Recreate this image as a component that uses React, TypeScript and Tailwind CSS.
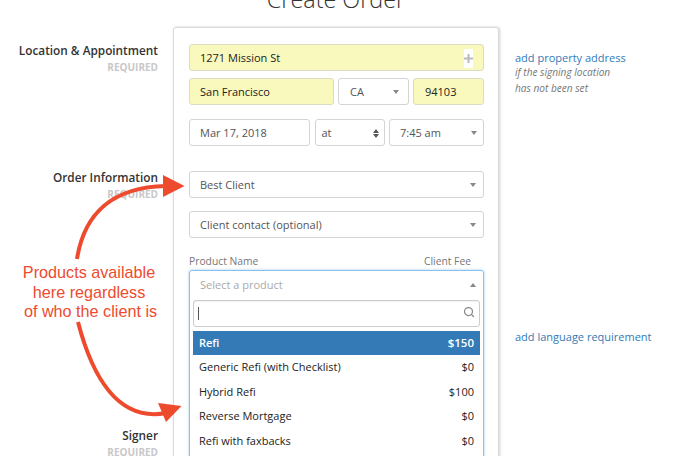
import React from 'react';
import { Search } from 'lucide-react';

const Caret = ({ up = false }: { up?: boolean }) => (
  <svg width="6" height="4" viewBox="0 0 6 4" className="shrink-0">
    <path d={up ? 'M3 0 L6 4 L0 4 Z' : 'M0 0 L6 0 L3 4 Z'} fill="#888" />
  </svg>
);

const boxBase =
  'h-[27px] pt-[1px] rounded-[3px] border flex items-center justify-between text-[11px] shrink-0';
const yellow = `${boxBase} bg-[#f9f9bd] border-[#dcdcc4] text-[#222]`;
const plain = `${boxBase} bg-white border-[#d4d4d4] text-[#555]`;

const SectionLabel = ({ title, className }: { title: string; className: string }) => (
  <div className={`flex flex-col items-end ${className}`}>
    <div className="text-[11.8px] leading-[16px] font-semibold text-[#333]">{title}</div>
    <div className="text-[10px] leading-[14px] mt-[2px] font-bold text-[#c8c8c8]">REQUIRED</div>
  </div>
);

const products = [
  { name: 'Generic Refi (with Checklist)', fee: '$0' },
  { name: 'Hybrid Refi', fee: '$100' },
  { name: 'Reverse Mortgage', fee: '$0' },
  { name: 'Refi with faxbacks', fee: '$0' },
];

const Annotation = () => (
  <>
    <svg width="200" height="456" viewBox="0 0 200 456" className="absolute left-0 top-0">
      <path d="M77 259 C84 214 112 187 166 186" fill="none" stroke="#ee4b2e" strokeWidth="4" />
      <path d="M184.5 186 L163 175 L163 197 Z" fill="#ee4b2e" />
      <path d="M78 322 C92 376 118 422 166 413" fill="none" stroke="#ee4b2e" strokeWidth="4" />
      <path d="M181.5 406 L158 403 L166 422 Z" fill="#ee4b2e" />
    </svg>
    <div className="absolute left-[4px] top-[263px] w-[170px] text-center text-[16.2px] leading-[19.5px] text-[#ee4b2e] font-['Liberation_Sans',sans-serif]">
      <div>Products available</div>
      <div>here regardless</div>
      <div className="pl-[3px]">of who the client is</div>
    </div>
  </>
);

export default function App() {
  return (
    <div className="relative w-[688px] h-[456px] overflow-hidden bg-white font-['Open_Sans',sans-serif]">
      <div className="h-[27px] flex justify-center items-end pr-[16px]">
        <h1 className="text-[23.4px] leading-[32px] mb-[12px] font-light text-[#333] whitespace-nowrap">Create Order</h1>
      </div>
      <div className="flex items-start">
        <div className="w-[173px] shrink-0 pr-[15px]">
          <SectionLabel title="Location & Appointment" className="mt-[15px]" />
          <SectionLabel title="Order Information" className="mt-[95px]" />
          <SectionLabel title="Signer" className="mt-[226px]" />
        </div>

        <div className="w-[326px] h-[460px] shrink-0 bg-white border border-[#dadada] rounded-[3px] shadow-[1px_0_3px_rgba(0,0,0,0.18)] pl-[15px] pr-[14px] pt-[16px] flex flex-col">
          <div className={`${yellow} pl-[10px] pr-[10px]`}>
            <span>1271 Mission St</span>
            <span className="w-[9px] h-[19px] bg-white flex items-center justify-center">
              <svg width="9" height="9" viewBox="0 0 9 9"><path d="M3.5 0 H5.5 V3.5 H9 V5.5 H5.5 V9 H3.5 V5.5 H0 V3.5 H3.5 Z" fill="#bbb" /></svg>
            </span>
          </div>
          <div className="flex justify-between mt-[7px]">
            <div className={`${yellow} w-[145px] pl-[10px]`}>San Francisco</div>
            <div className={`${plain} w-[71px] pl-[11px] pr-[9px]`}>
              <span>CA</span>
              <Caret />
            </div>
            <div className={`${yellow} w-[71px] pl-[11px]`}>94103</div>
          </div>
          <div className="flex justify-between mt-[14px]">
            <div className={`${plain} w-[121px] pl-[10px]`}>Mar 17, 2018</div>
            <div className={`${plain} w-[70px] pl-[6px] pr-[5px]`}>
              <span>at</span>
              <span className="flex flex-col gap-[1px]">
                <svg width="6" height="4" viewBox="0 0 6 4"><path d="M3 0 L6 4 L0 4 Z" fill="#555" /></svg>
                <svg width="6" height="4" viewBox="0 0 6 4"><path d="M0 0 L6 0 L3 4 Z" fill="#555" /></svg>
              </span>
            </div>
            <div className={`${plain} w-[95px] pl-[10px] pr-[6px]`}>
              <span>7:45 am</span>
              <Caret />
            </div>
          </div>
          <div className={`${plain} mt-[25px] pl-[10px] pr-[7px]`}>
            <span>Best Client</span>
            <Caret />
          </div>
          <div className={`${plain} mt-[13px] pl-[10px] pr-[7px]`}>
            <span>Client contact (optional)</span>
            <Caret />
          </div>
          <div className="flex justify-between mt-[14px] pr-[13px] text-[10.3px] leading-[18px] text-[#777]">
            <span>Product Name</span>
            <span>Client Fee</span>
          </div>
          <div className="rounded-t-[3px] border border-[#8cc0ea] shadow-[0_0_3px_rgba(102,175,233,0.6)] h-[200px] flex flex-col px-[3px]">
            <div className="h-[29px] pb-[1px] shrink-0 flex items-center justify-between pl-[7px] pr-[4px] text-[11px] text-[#aaa]">
              <span>Select a product</span>
              <Caret up />
            </div>
            <div className="h-[27px] shrink-0 border border-[#ccc] rounded-[3px] flex items-center justify-between pl-[4px] pr-[4px] shadow-[inset_0_1px_1px_rgba(0,0,0,0.06)]">
              <span className="w-px h-[13px] bg-[#555]" />
              <Search size={12} strokeWidth={2.5} className="text-[#888] -mt-[3px]" />
            </div>
            <div className="mt-[4px] h-[24px] shrink-0 flex items-center justify-between px-[6px] bg-[#337ab7] text-white font-semibold text-[11px]">
              <span>Refi</span>
              <span className="text-[11.5px]">$150</span>
            </div>
            {products.map((p) => (
              <div key={p.name} className="h-[24.6px] shrink-0 flex items-center justify-between px-[6px] text-[11px] text-[#222]">
                <span>{p.name}</span>
                <span>{p.fee}</span>
              </div>
            ))}
          </div>
        </div>

        <div className="pl-[16px] text-[11px] text-[#337ab7]">
          <div className="mt-[23px] leading-[16px]">add property address</div>
          <div className="italic text-[10.1px] leading-[15.5px] -mt-[1px] text-[#777]">
            <div>if the signing location</div>
            <div>has not been set</div>
          </div>
          <div className="mt-[233px] leading-[16px]">add language requirement</div>
        </div>
      </div>
      <Annotation />
    </div>
  );
}
